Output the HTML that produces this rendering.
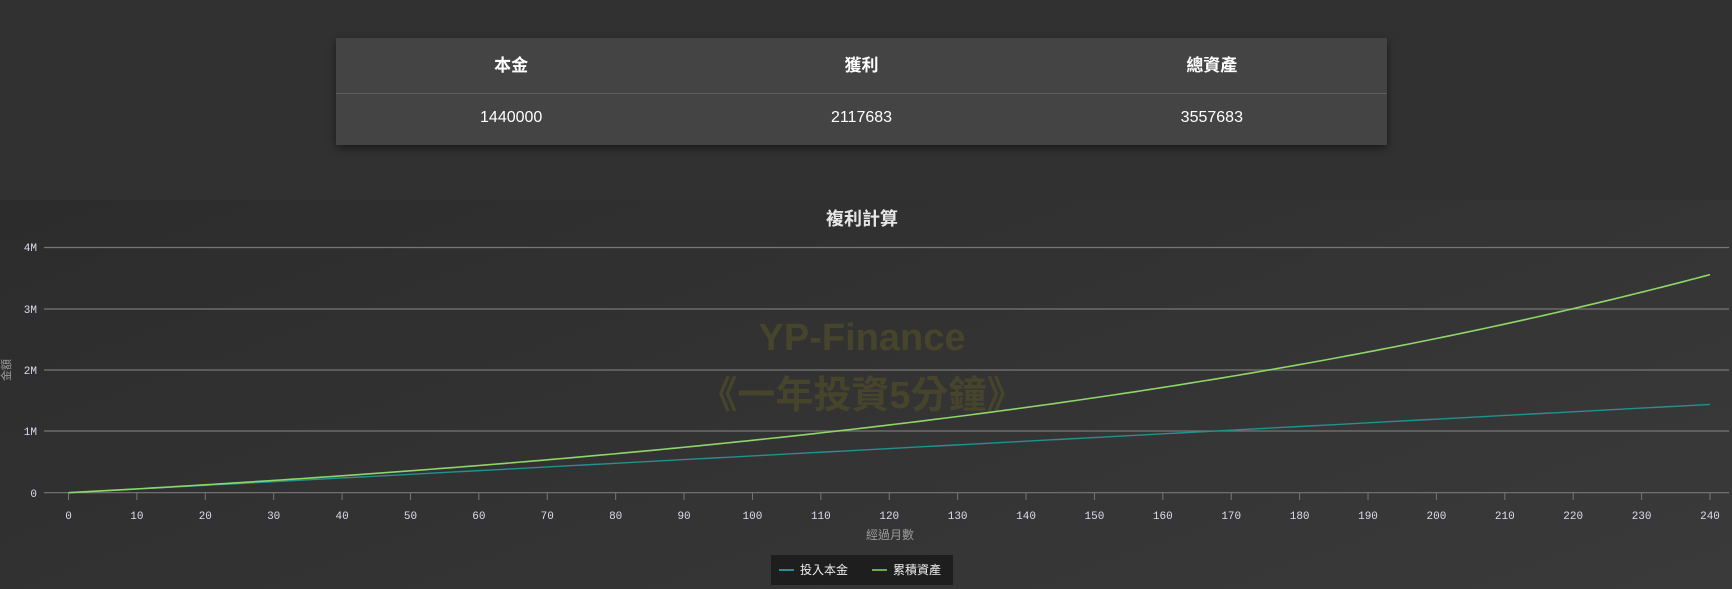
<!DOCTYPE html>
<html><head><meta charset="utf-8"><style>
html,body{margin:0;padding:0;width:1732px;height:589px;overflow:hidden;background:#303030;font-family:"Liberation Sans","Noto Sans CJK TC",sans-serif;}
.top{position:absolute;left:0;top:0;width:1732px;height:200px;background:#313131;}
.tbl{position:absolute;left:336px;top:38px;width:1051px;height:107px;background:#444;box-shadow:0 3px 8px rgba(0,0,0,0.45);color:#fff;}
.row{position:absolute;left:0;width:100%;display:flex;}
.row div{flex:1;text-align:center;}
.h{top:0;height:55px;line-height:55px;font-weight:bold;font-size:17px;border-bottom:1px solid #5e5e5e;}
.v{top:56px;height:51px;line-height:48px;font-size:16px;}
.chart{position:absolute;left:0;top:200px;width:1732px;height:389px;background:linear-gradient(160deg,#2c2c2c 0%,#333 50%,#3a3a3a 100%);}
</style></head><body>
<div class="top"></div>
<div class="tbl">
<div class="row h"><div>本金</div><div>獲利</div><div>總資產</div></div>
<div class="row v"><div>1440000</div><div>2117683</div><div>3557683</div></div>
</div>
<div class="chart"></div>
<svg id="s" width="1732" height="589" style="position:absolute;left:0;top:0" font-family="Liberation Mono,Noto Sans CJK TC,monospace">
<text x="862" y="225" fill="#e6e6e6" font-size="18" font-weight="bold" text-anchor="middle" font-family="Liberation Sans,Noto Sans CJK TC,sans-serif">複利計算</text>
<g stroke="#777" stroke-width="1.2">
<line x1="44" y1="247.5" x2="1729" y2="247.5"/>
<line x1="44" y1="309" x2="1729" y2="309"/>
<line x1="44" y1="370" x2="1729" y2="370"/>
<line x1="44" y1="431" x2="1729" y2="431"/>
<line x1="44" y1="492.7" x2="1729" y2="492.7"/>
</g>
<g fill="#dde" font-size="11" text-anchor="end">
<text x="37" y="251">4M</text><text x="37" y="313">3M</text><text x="37" y="374">2M</text><text x="37" y="435">1M</text><text x="37" y="497">0</text>
</g>
<text transform="translate(10,370) rotate(-90)" fill="#999" font-size="11" text-anchor="middle" font-family="Liberation Sans,Noto Sans CJK TC,sans-serif">金額</text>
<g id="ticks" stroke="#777" stroke-width="1"></g>
<g id="tl" fill="#dde" font-size="11" text-anchor="middle"></g>
<text x="890" y="539" fill="#999" font-size="12" text-anchor="middle" font-family="Liberation Sans,Noto Sans CJK TC,sans-serif">經過月數</text>
<g fill="#46452b" font-weight="bold" text-anchor="middle" font-family="Liberation Sans,Noto Sans CJK TC,sans-serif">
<text x="862" y="350" font-size="38">YP-Finance</text>
<text x="862" y="408" font-size="38">《一年投資5分鐘》</text>
</g>
<polyline id="p1" fill="none" stroke="#23918f" stroke-width="1.4"/>
<polyline id="p2" fill="none" stroke="#8fd66a" stroke-width="1.6"/>
<rect x="771" y="555" width="182" height="30" fill="#1e1e1e"/>
<line x1="779" y1="570" x2="794" y2="570" stroke="#23918f" stroke-width="2"/>
<line x1="872" y1="570" x2="887" y2="570" stroke="#6fa84f" stroke-width="2"/>
<g fill="#eee" font-size="12" font-family="Liberation Sans,Noto Sans CJK TC,sans-serif">
<text x="800" y="574">投入本金</text><text x="893" y="574">累積資產</text>
</g>
</svg>
<script>
var x0=68.5,x1=1710,y0=492.7,k=61.3/1e6;
function X(m){return x0+(x1-x0)*m/240;}
function Y(v){return y0-v*k;}
var tk='',tl='';
for(var m=0;m<=240;m+=10){var x=X(m);tk+='<line x1="'+x+'" y1="493" x2="'+x+'" y2="500"/>';tl+='<text x="'+x+'" y="519">'+m+'</text>';}
document.getElementById('ticks').innerHTML=tk;document.getElementById('tl').innerHTML=tl;
var r=0.08/12,a=[],b=[],v=0;
for(var m=0;m<=240;m++){
 var inv=6000*m;
 if(m>0){v=(v+6000)*(1+r);}
 a.push(X(m)+','+Y(inv));
}
var f=3557683/v;v=0;
for(var m=0;m<=240;m++){if(m>0)v=(v+6000)*(1+r);b.push(X(m)+','+Y(v*f));}
document.getElementById('p1').setAttribute('points',a.join(' '));
document.getElementById('p2').setAttribute('points',b.join(' '));
</script>
</body></html>
